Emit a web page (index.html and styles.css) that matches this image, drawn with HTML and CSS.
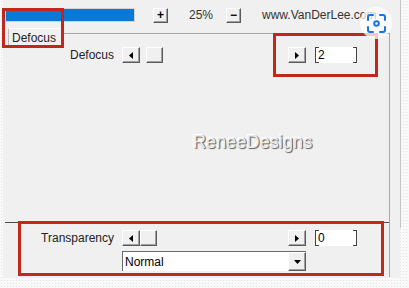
FILE: index.html
```html
<!DOCTYPE html>
<html lang="en">
<head>
  <meta charset="UTF-8">
  <title>Defocus</title>
  <link rel="stylesheet" href="styles.css">
</head>
<body>

  <div class="dialog">
    <div class="toprow">
      <div class="preview-bar"></div>
      <button class="btn btn-zoom">+</button>
      <span class="zoom-value">25%</span>
      <button class="btn btn-zoom">&minus;</button>
      <span class="url">www.VanDerLee.com</span>
    </div>

    <div class="panel">
      <div class="tabstrip">
        <div class="tab">Defocus</div>
        <div class="tabline"></div>
      </div>

      <div class="ctrl-row">
        <label class="ctrl-label">Defocus</label>
        <button class="btn btn-arrow">
          <svg width="4" height="7" viewBox="0 0 4 7"><polygon points="4,0 4,7 0,3.5" fill="#000"/></svg>
        </button>
        <div class="track"><div class="btn thumb thumb-defocus"></div></div>
        <button class="btn btn-arrow">
          <svg width="4" height="7" viewBox="0 0 4 7"><polygon points="0,0 0,7 4,3.5" fill="#000"/></svg>
        </button>
        <span></span>
        <div class="numfield">2</div>
      </div>

      <div class="canvas">
        <span class="watermark">ReneeDesigns</span>
      </div>

      <div class="bottom-group">
        <div class="ctrl-row">
          <label class="ctrl-label">Transparency</label>
          <button class="btn btn-arrow">
            <svg width="4" height="7" viewBox="0 0 4 7"><polygon points="4,0 4,7 0,3.5" fill="#000"/></svg>
          </button>
          <div class="track"><div class="btn thumb"></div></div>
          <button class="btn btn-arrow">
            <svg width="4" height="7" viewBox="0 0 4 7"><polygon points="0,0 0,7 4,3.5" fill="#000"/></svg>
          </button>
          <span></span>
          <div class="numfield">0</div>
        </div>
        <div class="ctrl-row">
          <span></span>
          <div class="dropdown">
            <span class="dropdown-text">Normal</span>
            <button class="btn btn-drop">
              <svg width="7" height="4" viewBox="0 0 7 4"><polygon points="0,0 7,0 3.5,4" fill="#000"/></svg>
            </button>
          </div>
        </div>
      </div>
    </div>

    <!-- annotation boxes drawn over the dialog -->
    <div class="mark mark-tab"></div>
    <div class="mark mark-field"></div>
    <div class="mark mark-bottom"></div>

    <div class="lens">
      <svg width="19" height="19" viewBox="0 0 19 19" fill="none" stroke="#1a73e8" stroke-width="2" stroke-linecap="round">
        <path d="M1 6V3a2 2 0 0 1 2-2h3"/>
        <path d="M13 1h3a2 2 0 0 1 2 2v3"/>
        <path d="M18 13v3a2 2 0 0 1-2 2h-3"/>
        <path d="M6 18H3a2 2 0 0 1-2-2v-3"/>
        <circle cx="9.5" cy="9.5" r="2.3"/>
      </svg>
    </div>
  </div>

</body>
</html>
```

FILE: styles.css
```css
body {
  margin: 0;
  background-color: #f9f9f9;
  background-image: radial-gradient(#e4e4e4 0.6px, transparent 0.8px);
  background-size: 3px 3px;
  font-family: "Liberation Sans", Arial, sans-serif;
  font-size: 12px;
  color: #1e1e1e;
}
.dialog {
  position: relative;
  margin-left: 3px;
  width: 397px;
  height: 278px;
  background: #f0f0f0;
  display: flex;
  flex-direction: column;
}
/* outer frame line, only along the upper part */
.dialog::after {
  content: "";
  position: absolute;
  right: -1px;
  top: 0;
  height: 228px;
  border-right: 1px solid #c4c4c4;
}
.toprow {
  height: 28px;
  display: flex;
  align-items: center;
  padding-top: 2px;
  box-sizing: border-box;
}
.preview-bar {
  margin-left: 2px;
  width: 128px;
  height: 12px;
  background: #0a78d4;
  border: 1px solid #d4d4d4;
}
.btn {
  box-sizing: border-box;
  background: #f0f0f0;
  border: 1px solid;
  border-color: #ffffff #5a5a5a #5a5a5a #ffffff;
  box-shadow: inset -1px -1px 0 #a0a0a0;
  padding: 0;
  margin: 0;
  font-family: "Liberation Sans", Arial, sans-serif;
  color: #000;
  display: flex;
  align-items: center;
  justify-content: center;
}
.btn-zoom {
  width: 15px;
  height: 15px;
  font-size: 12px;
  font-weight: bold;
  line-height: 1;
  margin-left: 18px;
}
.zoom-value {
  margin-left: 21px;
  width: 22px;
  color: #333;
}
.zoom-value + .btn-zoom {
  margin-left: 15px;
}
.url {
  margin-left: 21px;
  color: #333;
}
.panel {
  flex: 1;
  margin-left: 5px;
  width: 382px;
  display: flex;
  flex-direction: column;
  position: relative;
}
.panel::after {
  content: "";
  position: absolute;
  right: 0;
  top: 5px;
  bottom: 1px;
  border-right: 1px solid #a8a8a8;
}
.tabstrip {
  display: flex;
  height: 18px;
}
.tab {
  width: 51px;
  padding-left: 3px;
  line-height: 17px;
  padding-top: 1px;
  border-left: 1px solid #bdbdbd;
  border-top: 1px solid #fff;
  color: #222;
}
.tabline {
  flex: 1;
  margin-top: 5px;
  border-top: 1px solid #a8a8a8;
}
.ctrl-row {
  display: grid;
  grid-template-columns: 114px 18px 148px 18px 9px 42px;
  align-items: center;
  height: 16px;
  margin-top: 1px;
}
.ctrl-label {
  text-align: right;
  padding-right: 8px;
  color: #222;
}
.btn-arrow {
  width: 18px;
  height: 16px;
}
.track {
  height: 16px;
  display: flex;
}
.thumb {
  width: 17px;
  height: 16px;
}
.thumb-defocus {
  margin-left: 6px;
}
.numfield {
  height: 16px;
  box-sizing: border-box;
  background-color: #fff;
  border-left: 1px solid #444;
  border-right: 1px solid #444;
  background-image:
    linear-gradient(#444, #444), linear-gradient(#444, #444),
    linear-gradient(#444, #444), linear-gradient(#444, #444);
  background-size: 3px 1px;
  background-repeat: no-repeat;
  background-position: left top, left bottom, right top, right bottom;
  padding-left: 2px;
  line-height: 16px;
  color: #000;
}
.canvas {
  flex: 1;
  display: flex;
  align-items: center;
  padding-left: 185px;
}
.watermark {
  font-size: 18px;
  letter-spacing: 0.1px;
  color: #ececec;
  text-shadow: 1px 1px 1px #5e5e5e, -1px -1px 0 #ffffff, 1px 0 0 #9a9a9a;
}
.bottom-group {
  border-top: 1px solid #4a4a4a;
  margin-left: -3px;
  padding: 6px 0 7px 3px;
}
.bottom-group .ctrl-row + .ctrl-row {
  margin-top: 5px;
  height: 20px;
}
.dropdown {
  grid-column: 2 / 5;
  height: 20px;
  box-sizing: border-box;
  background: #fff;
  border-top: 1px solid #6a6a6a;
  border-left: 1px solid #6a6a6a;
  display: flex;
  align-items: center;
}
.dropdown-text {
  flex: 1;
  padding-left: 2px;
  color: #000;
}
.btn-drop {
  width: 18px;
  height: 19px;
}
.mark {
  position: absolute;
  border: 3px solid #c2271b;
  box-sizing: border-box;
}
.mark-tab {
  left: -1px;
  top: 8px;
  width: 62px;
  height: 40px;
}
.mark-field {
  left: 270px;
  top: 33px;
  width: 105px;
  height: 44px;
}
.mark-bottom {
  left: 15px;
  top: 221px;
  width: 366px;
  height: 55px;
}
.lens {
  position: absolute;
  left: 357px;
  top: 7px;
  width: 32px;
  height: 32px;
  border-radius: 50%;
  background: rgba(255, 255, 255, 0.75);
  display: flex;
  align-items: center;
  justify-content: center;
}
```
